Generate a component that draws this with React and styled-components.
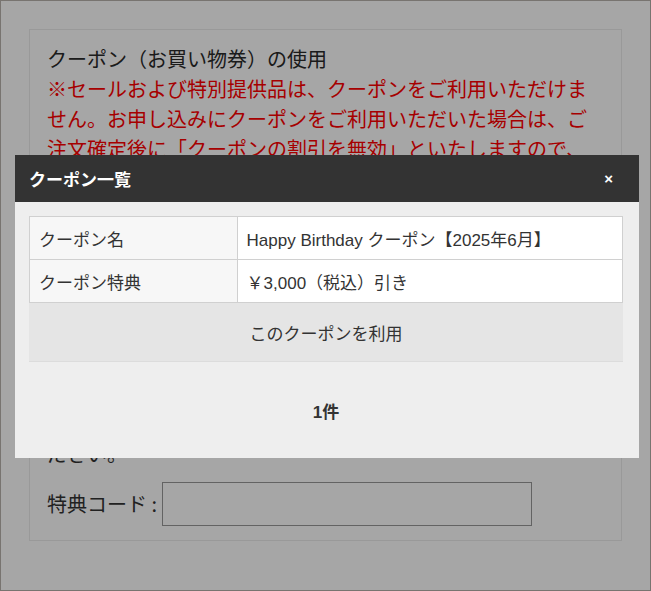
import styled, { createGlobalStyle } from "styled-components";

const GlobalStyle = createGlobalStyle`
  html, body {
    margin: 0;
    padding: 0;
    background: #fff;
  }
  body {
    font-family: "Liberation Sans", "Noto Sans CJK JP", sans-serif;
    color: #333;
  }
  * {
    box-sizing: border-box;
  }
`;

const notes = [
  "※クーポンは１回のご注文につき１枚のみ有効です。",
  "※有効期限を過ぎたクーポンはご利用いただけません。",
  "※他のクーポンとの併用はできません。",
  "※クーポンの譲渡・換金はできません。",
  "※ご注文のキャンセル時、クーポンは返却されません。",
  "※一部対象外の商品がございます。",
  "※詳しくはご利用ガイドをご確認ください。",
];

export default function App() {
  return (
    <>
      <GlobalStyle />
      <Page>
        <CouponBox>
          <BoxTitle>クーポン（お買い物券）の使用</BoxTitle>
          <Notice>
            ※セールおよび特別提供品は、クーポンをご利用いただけません。お申し込みにクーポンをご利用いただいた場合は、ご注文確定後に「クーポンの割引を無効」といたしますので、あらかじめご了承ください。
          </Notice>
          {notes.map((n) => (
            <Notice key={n}>{n}</Notice>
          ))}
          <Guide>
            特典コードをお持ちの方は、下記入力欄にコードをご入力ください。
          </Guide>
          <CodeRow>
            <CodeLabel>特典コード :</CodeLabel>
            <CodeInput type="text" />
          </CodeRow>
        </CouponBox>
      </Page>

      <Overlay />

      <Modal>
        <ModalHeader>
          <ModalTitle>クーポン一覧</ModalTitle>
          <CloseButton type="button">×</CloseButton>
        </ModalHeader>
        <ModalBody>
          <CouponTable>
            <tbody>
              <tr>
                <LabelCell>クーポン名</LabelCell>
                <ValueCell>Happy Birthday クーポン【2025年6月】</ValueCell>
              </tr>
              <tr>
                <LabelCell>クーポン特典</LabelCell>
                <ValueCell>￥3,000（税込）引き</ValueCell>
              </tr>
            </tbody>
          </CouponTable>
          <UseButton type="button">このクーポンを利用</UseButton>
          <Count>1件</Count>
        </ModalBody>
      </Modal>
    </>
  );
}

const Page = styled.div`
  height: 591px;
  border: 1px solid #b8b3ad;
  padding: 28px;
`;

const CouponBox = styled.div`
  border: 1px solid #ececec;
  padding: 14px 17px 14px 17px;
  font-family: "Noto Sans CJK JP", sans-serif;
  font-size: 20px;
  line-height: 30px;
  color: #333;
`;

const BoxTitle = styled.h2`
  margin: 0;
  font-size: 20px;
  font-weight: 400;
  line-height: 30px;
  color: #2a2a2a;
`;

const Notice = styled.p`
  margin: 0;
  color: #ff0000;
`;

const Guide = styled.p`
  margin: 5px 0 0;
`;

const CodeRow = styled.div`
  display: flex;
  align-items: center;
  margin-top: 13px;
`;

const CodeLabel = styled.span`
  margin-right: 5px;
`;

const CodeInput = styled.input`
  width: 370px;
  height: 44px;
  border: 1px solid #999;
  background: #fff;
  margin: 0;
`;

const Overlay = styled.div`
  position: fixed;
  inset: 0;
  background: rgba(0, 0, 0, 0.35);
`;

const Modal = styled.div`
  position: fixed;
  top: 155px;
  left: 15px;
  width: 624px;
  background: #eeeeee;
`;

const ModalHeader = styled.div`
  display: flex;
  align-items: center;
  justify-content: space-between;
  height: 47px;
  padding: 0 22px 0 14px;
  background: #333;
`;

const ModalTitle = styled.h3`
  margin: 0;
  color: #fff;
  font-family: "Noto Sans CJK JP", sans-serif;
  font-size: 17px;
  font-weight: 700;
`;

const CloseButton = styled.button`
  border: 0;
  background: none;
  padding: 0 4px;
  color: #fff;
  font-family: "Liberation Sans", sans-serif;
  font-size: 15px;
  font-weight: 700;
  cursor: pointer;
`;

const ModalBody = styled.div`
  padding: 14px 16px 0 14px;
`;

const CouponTable = styled.table`
  width: 100%;
  border-collapse: collapse;
  font-size: 17px;
  color: #333;
`;

const LabelCell = styled.th`
  width: 35%;
  height: 43px;
  padding: 0 9px;
  border: 1px solid #d0d0d0;
  background: #f7f7f7;
  font-weight: 400;
  text-align: left;
`;

const ValueCell = styled.td`
  height: 43px;
  padding: 0 9px;
  border: 1px solid #d0d0d0;
  background: #fff;
`;

const UseButton = styled.button`
  display: block;
  width: 100%;
  height: 59px;
  border: 0;
  border-bottom: 1px solid #dcdcdc;
  background: #e5e5e5;
  color: #333;
  font-family: "Liberation Sans", "Noto Sans CJK JP", sans-serif;
  font-size: 17px;
  cursor: pointer;
`;

const Count = styled.div`
  display: flex;
  align-items: center;
  justify-content: center;
  height: 96px;
  font-size: 17px;
  font-weight: 700;
  color: #333;
`;
